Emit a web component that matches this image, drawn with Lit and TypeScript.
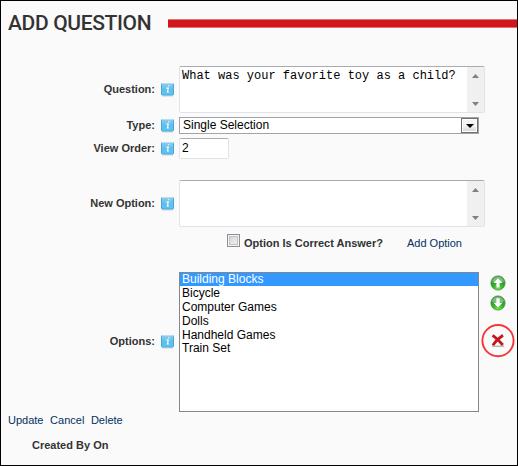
import { LitElement, html, css, svg } from "lit";
import { customElement } from "lit/decorators.js";

const OPTIONS = ["Building Blocks", "Bicycle", "Computer Games", "Dolls", "Handheld Games", "Train Set"];

const infoIcon = html`<svg class="info" width="13" height="14" viewBox="0 0 13 14">
  <defs>
    <linearGradient id="g" x1="0" y1="0" x2="0" y2="1">
      <stop offset="0" stop-color="#8cd0f0" /><stop offset=".5" stop-color="#62bdea" /><stop offset="1" stop-color="#55c8f8" />
    </linearGradient>
  </defs>
  <path d="M1 13H12" stroke="#d0d0d0" />
  <rect x=".5" y=".5" width="12" height="11.5" rx=".8" fill="url(#g)" stroke="#48a5dc" />
  <path d="M1 .5H12" stroke="#b5dff2" />
  <path d="M7.1 2.7h1.3M5.4 5.1h1.9L6.4 8.9h1.4" stroke="#fff" stroke-width="1.1" fill="none" />
</svg>`;

const arrow = (down: boolean) => html`<svg width="16" height="16" viewBox="0 0 16 16">
  <defs>
    <radialGradient id="a" cx=".5" cy=".95" r=".85">
      <stop offset="0" stop-color="#6fe83c" /><stop offset=".55" stop-color="#2fa82b" /><stop offset="1" stop-color="#3b923f" />
    </radialGradient>
  </defs>
  <circle cx="8" cy="8" r="7.1" fill="url(#a)" stroke="#3f8f44" stroke-width=".8" />
  <path d="M2 6.5A6.2 6.2 0 0 1 14 6.5Q8 8.5 2 6.5Z" fill="#fff" opacity=".35" />
  ${down
    ? svg`<path d="M6.4 3.2h3.2v4.5h2.9L8 12.5 3.5 7.7h2.9z" fill="#fff" />`
    : svg`<path d="M6.4 12.6h3.2V8.1h2.9L8 3.3 3.5 8.1h2.9z" fill="#fff" />`}
</svg>`;

const scrollbar = html`<div class="scroll">
  <svg width="7" height="4" viewBox="0 0 7 4"><path d="M3.5 0 7 4H0z" fill="#808080" /></svg>
  <svg width="7" height="4" viewBox="0 0 7 4"><path d="M0 0H7L3.5 4z" fill="#808080" /></svg>
</div>`;

@customElement("app-root")
export class AppRoot extends LitElement {
  static styles = css`
    :host {
      display: block;
      box-sizing: border-box;
      height: 466px;
      border: 1px solid #000;
      background: #fafafa;
      overflow: hidden;
      font: 11px/14px "Liberation Sans", Arial, sans-serif;
      color: #333;
    }
    * { box-sizing: border-box; }
    svg { display: block; flex: none; }
    .heading { display: flex; height: 65px; padding: 8px 0 0 7px; }
    h1 {
      margin: 0;
      width: 160px;
      font: 500 21px/28px Roboto, sans-serif;
      letter-spacing: -0.35px;
      white-space: nowrap;
    }
    .rule { flex: 1; height: 9px; margin-top: 10px; background: #d2171c; border: solid #df7478; border-width: 1px 0; }
    .row { display: flex; align-items: center; margin-bottom: 4px; }
    .label { width: 154px; padding-bottom: 2px; text-align: right; font-weight: bold; }
    .info { margin: 0 5px 0 6px; }
    .area {
      display: flex;
      width: 306px;
      height: 47px;
      border: 1px solid #dfe3ec;
      border-top-color: #a9abb0;
      border-radius: 2px;
      background: #fff;
      color: #000;
    }
    .typed { flex: 1; padding: 2px; font: 12px/14px "Liberation Mono", "Courier New", monospace; white-space: nowrap; }
    .scroll {
      width: 17px;
      padding: 7px 0 6px;
      background: #f0f0f0;
      display: flex;
      flex-direction: column;
      align-items: center;
      justify-content: space-between;
    }
    .select { display: flex; width: 300px; height: 17px; border: 1px solid #a2a4a8; background: #fff; color: #000; font-size: 12px; line-height: 15px; }
    .select span { flex: 1; padding-left: 3px; }
    .drop { width: 17px; height: 15px; border: 1px solid #6f6f6f; background: linear-gradient(#f4f4f4 50%, #d4d4d4); box-shadow: inset 0 0 0 1px #fff; display: grid; place-items: center; }
    .number { width: 50px; height: 21px; padding-left: 2px; border: 1px solid #dfe3ec; border-top-color: #a9abb0; border-radius: 2px; background: #fff; color: #000; font-size: 12px; line-height: 19px; }
    .new { margin-top: 21px; margin-bottom: 7px; }
    .add { display: flex; height: 38px; padding-left: 226px; font-weight: bold; }
    .check { width: 13px; height: 13px; margin-right: 4px; border: 1px solid #8e8f8f; background: linear-gradient(135deg, #cfd2d6, #f5f5f5); box-shadow: inset 0 0 0 1px #f4f4f4, inset 0 0 0 2px #bfc2c6; }
    .add span { padding-top: 2px; }
    a { color: #033063; font-weight: normal; }
    .add a { margin-left: 24px; padding-top: 2px; }
    .list { width: 300px; height: 140px; margin: 0; padding: 0; list-style: none; border: 1px solid #828790; background: #fff; color: #000; font-size: 12px; }
    .list li { height: 14px; padding-left: 2px; line-height: 13px; }
    .list .on { height: 13px; margin-bottom: 1px; background: #3399ff; color: #fff; }
    .list li:last-child { margin-top: -1px; }
    .tools { align-self: flex-start; display: flex; flex-direction: column; align-items: center; width: 37px; padding-top: 3px; gap: 4px; }
    .remove { margin-top: 9px; }
    .actions { display: flex; gap: 6.6px; padding: 0 0 0 7px; margin-top: -3px; }
    .created { margin: 11px 0 0 31px; font-weight: bold; }
  `;

  render() {
    return html`
      <div class="heading"><h1>ADD QUESTION</h1><div class="rule"></div></div>
      <div class="row"><span class="label">Question:</span>${infoIcon}
        <div class="area"><div class="typed">What was your favorite toy as a child?</div>${scrollbar}</div>
      </div>
      <div class="row"><span class="label">Type:</span>${infoIcon}
        <div class="select"><span>Single Selection</span>
          <div class="drop"><svg width="8" height="4" viewBox="0 0 8 4"><path d="M0 0H8L4 4z" /></svg></div>
        </div>
      </div>
      <div class="row"><span class="label">View Order:</span>${infoIcon}<div class="number">2</div></div>
      <div class="row new"><span class="label">New Option:</span>${infoIcon}
        <div class="area"><div class="typed"></div>${scrollbar}</div>
      </div>
      <div class="add"><div class="check"></div><span>Option Is Correct Answer?</span><a>Add Option</a></div>
      <div class="row"><span class="label">Options:</span>${infoIcon}
        <ul class="list">${OPTIONS.map((o, i) => html`<li class=${i === 0 ? "on" : ""}>${o}</li>`)}</ul>
        <div class="tools">${arrow(false)}${arrow(true)}
          <svg class="remove" width="34" height="34" viewBox="0 0 34 34">
            <circle cx="17" cy="16.6" r="15.6" fill="none" stroke="#f5363b" stroke-width="1.9" />
            <path d="M11 22.3h12" stroke="#b8b8b8" stroke-width="1.5" />
            <path d="M11.6 11.4Q16 14.5 21.8 21M22 11.2Q16 15 11.8 21.2" fill="none" stroke="#c4161c" stroke-width="2.8" />
          </svg>
        </div>
      </div>
      <div class="actions"><a>Update</a><a>Cancel</a><a>Delete</a></div>
      <div class="created">Created By On</div>
    `;
  }
}
